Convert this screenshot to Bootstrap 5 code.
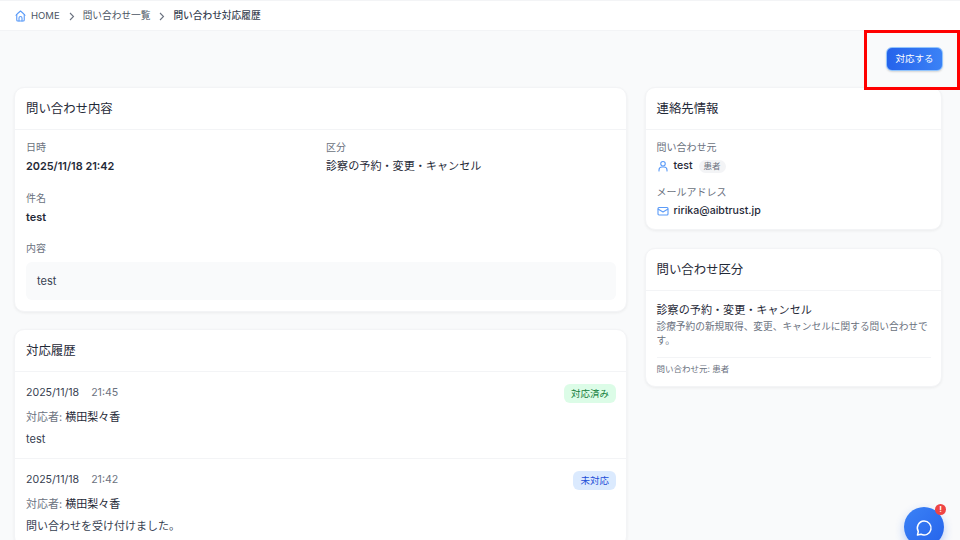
<!DOCTYPE html>
<html lang="ja">
<head>
<meta charset="utf-8">
<title>問い合わせ対応履歴</title>
<link href="https://cdn.jsdelivr.net/npm/bootstrap@5.3.0/dist/css/bootstrap.min.css" rel="stylesheet">
<style>
html,body{height:540px;overflow:hidden}
body{background:#f9fafb;font-family:Inter,"Noto Sans CJK JP",sans-serif;color:#1f2937;position:relative}
.crumbbar{height:31px;background:#fff;border-top:1px solid #f3f4f6;border-bottom:1px solid #f3f4f6;padding:1px 0 0 15px;font-size:9.7px;color:#4b5563;gap:8px}
.crumbbar svg{display:block}
.homelabel{margin-left:-3px;font-size:9.5px}
.crumbcur{color:#374151;font-weight:500}
.actionrow{height:56px;padding:16px 17px 0 0}
.actbtn{width:57px;height:24px;padding:0;font-size:9.5px;line-height:22px;color:#fff;border:1px solid #93c5fd;border-radius:6px;background:linear-gradient(90deg,#2563eb,#3b82f6);box-shadow:0 1px 2px rgba(0,0,0,.15)}
.redmark{position:absolute;left:864px;top:30px;width:96px;height:60px;border:3px solid #f00}
.mainwrap{padding:0 18px 0 14px;gap:18px}
.leftcol{width:613px;flex:none}
.rightcol{width:297px;flex:none}
.panel{background:#fff;border:1px solid #f3f4f6;border-radius:10px;box-shadow:0 1px 3px rgba(0,0,0,.06);margin-bottom:18px}
.leftcol .panel{margin-bottom:17px}
.panelhead{height:42px;padding:2px 11px 0;font-size:12.4px;font-weight:400;color:#1f2937;border-bottom:1px solid #f3f4f6;display:flex;align-items:center}
.rightcol .panelhead{padding:2px 10.5px 0}
.flabel{font-size:10px;color:#6b7280;line-height:14px}
.fvalue{font-size:10.9px;font-weight:600;color:#1f2937;line-height:16px;margin-top:4px}
.fvaluesoft{font-size:11.100px;font-weight:400;color:#1f2937}
.contentbody{padding:10px 10px 11px 11px}
.fieldrow{height:51px}
.fieldrow.tight{height:50px}
.fieldcol{width:300px}
.quotebox{background:#f9fafb;border-radius:6px;height:38px;padding:0 11px;font-size:11px;color:#374151;margin-top:7px}
.histitem{padding:12px 10px 0 11px;height:87px;border-bottom:1px solid #f3f4f6;font-size:11px;color:#374151}
.histitem:last-child{border-bottom:0}
.histdate{line-height:18px;height:18px;font-size:10.6px}
.histtime{color:#6b7280;margin-left:9px}
.histline{line-height:16px;margin-top:6.5px}
.histsoft{color:#6b7280}
.histname{color:#1f2937;font-weight:400}
.statepill{font-size:9.5px;line-height:19px;height:19px;padding:0 7px;border-radius:6px}
.statedone{background:#dcfce7;color:#15803d}
.statenew{background:#dbeafe;color:#1d4ed8}
.sidebody{padding:10px 10.5px 0;height:99px}
.sideline{font-size:10.6px;font-weight:500;color:#1f2937;line-height:16px;margin-top:4px;gap:5px}
.sideicon{width:12px;display:block;flex:none}
.rolepill{background:#f3f4f6;color:#6b7280;font-size:8.5px;line-height:13px;padding:0 5px;border-radius:7px;font-weight:400;margin-left:1px}
.mailgap{margin-top:11px}
.catbody{padding:12px 10.5px 0;height:95px}
.cattitle{font-size:11.1px;font-weight:400;color:#1f2937;line-height:15px}
.catdesc{font-size:9.7px;line-height:14px;color:#6b7280;margin-top:2px}
.catfoot{border-top:1px solid #f3f4f6;margin-top:9px;padding-top:5px;font-size:8.5px;color:#6b7280;line-height:12px}
.chatfab{position:absolute;left:904px;top:507px;width:40px;height:40px;border-radius:50%;background:linear-gradient(135deg,#3b82f6,#2563eb);box-shadow:0 4px 10px rgba(37,99,235,.3)}
.chatfab svg{display:block}
.chatdot{position:absolute;left:31px;top:-3px;width:11px;height:11px;border-radius:50%;background:#ef4444;color:#fff;font-size:8px;line-height:11px;font-weight:700;text-align:center}
</style>
</head>
<body>
<nav class="crumbbar d-flex align-items-center">
  <svg width="11" height="12" viewBox="0 0 22 24" fill="none" stroke="#5b9bf8" stroke-width="2.200" stroke-linejoin="round" stroke-linecap="round"><path d="M2 10.500C5 7 8 4.500 11 2c3 2.500 6 5 9 8.500"/><path d="M3.500 9v11a2 2 0 0 0 2 2h11a2 2 0 0 0 2-2V9"/><path d="M8 22v-6a3 3 0 0 1 6 0v6"/></svg>
  <span class="homelabel">HOME</span>
  <svg width="7" height="9" viewBox="0 0 7 9" fill="none" stroke="#6b7280" stroke-width="1.100"><path d="M2 1l3.500 3.500L2 8"/></svg>
  <span>問い合わせ一覧</span>
  <svg width="7" height="9" viewBox="0 0 7 9" fill="none" stroke="#6b7280" stroke-width="1.100"><path d="M2 1l3.500 3.500L2 8"/></svg>
  <span class="crumbcur">問い合わせ対応履歴</span>
</nav>
<div class="actionrow d-flex justify-content-end align-items-start">
  <button type="button" class="btn actbtn">対応する</button>
</div>
<div class="redmark"></div>
<div class="mainwrap d-flex align-items-start">
  <div class="leftcol">
    <section class="panel">
      <div class="panelhead">問い合わせ内容</div>
      <div class="contentbody">
        <div class="d-flex fieldrow">
          <div class="fieldcol"><div class="flabel">日時</div><div class="fvalue">2025/11/18 21:42</div></div>
          <div><div class="flabel">区分</div><div class="fvalue fvaluesoft">診察の予約・変更・キャンセル</div></div>
        </div>
        <div class="fieldrow tight"><div class="flabel">件名</div><div class="fvalue">test</div></div>
        <div class="flabel">内容</div>
        <div class="quotebox d-flex align-items-center">test</div>
      </div>
    </section>
    <section class="panel">
      <div class="panelhead">対応履歴</div>
      <div class="histitem">
        <div class="d-flex justify-content-between align-items-center histdate"><div>2025/11/18 <span class="histtime">21:45</span></div><span class="statepill statedone">対応済み</span></div>
        <div class="histline"><span class="histsoft">対応者:</span> <span class="histname">横田梨々香</span></div>
        <div class="histline">test</div>
      </div>
      <div class="histitem">
        <div class="d-flex justify-content-between align-items-center histdate"><div>2025/11/18 <span class="histtime">21:42</span></div><span class="statepill statenew">未対応</span></div>
        <div class="histline"><span class="histsoft">対応者:</span> <span class="histname">横田梨々香</span></div>
        <div class="histline">問い合わせを受け付けました。</div>
      </div>
    </section>
  </div>
  <div class="rightcol">
    <section class="panel">
      <div class="panelhead">連絡先情報</div>
      <div class="sidebody">
        <div class="flabel">問い合わせ元</div>
        <div class="sideline d-flex align-items-center">
          <svg class="sideicon" height="12" viewBox="0 0 24 24" fill="none" stroke="#5b9bf8" stroke-width="2.200" stroke-linecap="round"><circle cx="12" cy="7.500" r="4.500"/><path d="M4 22v-2a6 6 0 0 1 6-6h4a6 6 0 0 1 6 6v2"/></svg>
          <span>test</span><span class="rolepill">患者</span>
        </div>
        <div class="flabel mailgap">メールアドレス</div>
        <div class="sideline d-flex align-items-center">
          <svg class="sideicon" height="12" viewBox="0 0 24 24" fill="none" stroke="#5b9bf8" stroke-width="2.200" stroke-linejoin="round"><rect x="2" y="5" width="20" height="15" rx="2"/><path d="M2 8l10 6 10-6"/></svg>
          <span>ririka@aibtrust.jp</span>
        </div>
      </div>
    </section>
    <section class="panel">
      <div class="panelhead">問い合わせ区分</div>
      <div class="catbody">
        <div class="cattitle">診察の予約・変更・キャンセル</div>
        <div class="catdesc">診療予約の新規取得、変更、キャンセルに関する問い合わせです。</div>
        <div class="catfoot">問い合わせ元: 患者</div>
      </div>
    </section>
  </div>
</div>
<div class="chatfab d-flex justify-content-center">
  <svg class="mt-2 pt-1" width="18" height="22" viewBox="0 0 18 18" fill="none" stroke="#fff" stroke-width="1.500" stroke-linejoin="round"><path d="M9 2a7 7 0 1 1-3 13.300L2.500 16l.8-3.500A7 7 0 0 1 9 2z"/></svg>
  <span class="chatdot">!</span>
</div>
</body>
</html>
